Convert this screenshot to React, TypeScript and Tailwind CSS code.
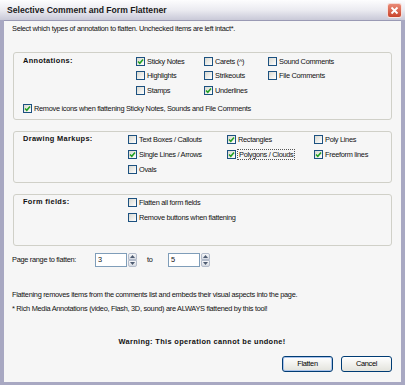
import React from "react";

function CheckBox({ checked, label, focus }: { checked?: boolean; label: string; focus?: boolean }) {
  return (
    <div className="flex items-center whitespace-nowrap">
      <span className="w-[9px] h-[9px] shrink-0 border border-[#1c5180] bg-gradient-to-br from-[#d8d8d0] to-white flex items-center justify-center">
        {checked ? (
          <svg width="7" height="7" viewBox="0 0 7 7">
            <path d="M1 3.4 L2.8 5.3 L6 1.4" stroke="#21a121" strokeWidth="1.5" fill="none" />
          </svg>
        ) : null}
      </span>
      <span className={"ml-[2px] leading-[9px] " + (focus ? "outline outline-1 outline-dotted outline-[#555] px-[1px]" : "")}>
        {label}
      </span>
    </div>
  );
}

function Spin({ value }: { value: string }) {
  return (
    <div className="flex items-center h-[14px]">
      <div className="w-[32px] h-[14px] bg-white border border-[#7f9db9] pl-[2px] leading-[12px]">{value}</div>
      <div className="flex flex-col ml-[1px]">
        <span className="w-[9px] h-[7px] border border-[#b4bccb] bg-gradient-to-b from-[#f6f7f9] to-[#d6dae2] rounded-t-[2px] flex items-center justify-center">
          <svg width="5" height="3" viewBox="0 0 5 3"><path d="M0 3 L2.5 0 L5 3 Z" fill="#4d5a70" /></svg>
        </span>
        <span className="w-[9px] h-[7px] border border-[#b4bccb] bg-gradient-to-b from-[#f6f7f9] to-[#d6dae2] rounded-b-[2px] flex items-center justify-center">
          <svg width="5" height="3" viewBox="0 0 5 3"><path d="M0 0 L2.5 3 L5 0 Z" fill="#4d5a70" /></svg>
        </span>
      </div>
    </div>
  );
}

function XpButton({ label, primary }: { label: string; primary?: boolean }) {
  return (
    <button
      className={
        "w-[51px] h-[16px] rounded-[3px] border border-[#003c74] bg-gradient-to-b from-white to-[#e3e3dc] text-black leading-[14px] " +
        (primary ? "shadow-[inset_0_0_0_1px_#a9c2ea]" : "")
      }
    >
      {label}
    </button>
  );
}

export default function App() {
  return (
    <div className="w-[405px] h-[385px] flex flex-col bg-[#a8a8c2] font-['Liberation_Sans',Arial,sans-serif] text-[7.4px] tracking-[-0.3px] text-[#111]">
      <div className="h-[20px] shrink-0 flex items-center justify-between bg-gradient-to-b from-[#fdfdfe] via-[#ebebf1] to-[#c9c9d8] pl-[7px] pr-[3px]">
        <span className="font-bold text-[8.6px] tracking-[0px] text-[#1a1a1a]">Selective Comment and Form Flattener</span>
        <span className="w-[15px] h-[15px] rounded-[3px] border border-white/80 bg-gradient-to-b from-[#e98a77] to-[#c9432a] flex items-center justify-center">
          <svg width="9" height="9" viewBox="0 0 9 9">
            <path d="M1.5 1.5 L7.5 7.5 M7.5 1.5 L1.5 7.5" stroke="white" strokeWidth="1.8" />
          </svg>
        </span>
      </div>

      <div className="flex-1 mx-[4px] mb-[3px] bg-[#f6f6f6] border-t border-[#9a9ab4] flex flex-col pl-[8px] pr-[9px]">
        <div className="mt-[3px] h-[10px] leading-[10px]">
          Select which types of annotation to flatten. Unchecked items are left intact*.
        </div>

        <div className="mt-[18px] ml-[1px] border border-[#d0d0c8] rounded-[3px] pl-[9px] pt-[1px] pb-[4px] flex flex-col">
          <div className="flex">
            <div className="w-[113px] font-bold tracking-[0.35px] pt-[2px] leading-[10px]">Annotations:</div>
            <div className="flex flex-col">
              <div className="flex h-[14px] items-center">
                <div className="w-[68px]"><CheckBox checked label="Sticky Notes" /></div>
                <div className="w-[64px]"><CheckBox label="Carets (^)" /></div>
                <CheckBox label="Sound Comments" />
              </div>
              <div className="flex h-[15px] items-center">
                <div className="w-[68px]"><CheckBox label="Highlights" /></div>
                <div className="w-[64px]"><CheckBox label="Strikeouts" /></div>
                <CheckBox label="File Comments" />
              </div>
              <div className="flex h-[14px] items-center">
                <div className="w-[68px]"><CheckBox label="Stamps" /></div>
                <div className="w-[64px]"><CheckBox checked label="Underlines" /></div>
              </div>
            </div>
          </div>
          <div className="mt-[4px] h-[14px] flex items-center">
            <CheckBox checked label="Remove icons when flattening Sticky Notes, Sounds and File Comments" />
          </div>
        </div>

        <div className="mt-[11px] ml-[1px] border border-[#d0d0c8] rounded-[3px] pl-[9px] pb-[5px] flex">
          <div className="w-[105px] font-bold tracking-[0.35px] pt-[2px] leading-[10px]">Drawing Markups:</div>
          <div className="flex flex-col">
            <div className="flex h-[15px] items-center">
              <div className="w-[99px]"><CheckBox label="Text Boxes / Callouts" /></div>
              <div className="w-[87px]"><CheckBox checked label="Rectangles" /></div>
              <CheckBox label="Poly Lines" />
            </div>
            <div className="flex h-[15px] items-center">
              <div className="w-[99px]"><CheckBox checked label="Single Lines / Arrows" /></div>
              <div className="w-[87px]"><CheckBox checked focus label="Polygons / Clouds" /></div>
              <CheckBox checked label="Freeform lines" />
            </div>
            <div className="flex h-[15px] items-center">
              <CheckBox label="Ovals" />
            </div>
          </div>
        </div>

        <div className="mt-[11px] ml-[1px] border border-[#d0d0c8] rounded-[3px] pl-[9px] pb-[20px] flex">
          <div className="w-[105px] font-bold tracking-[0.35px] pt-[2px] leading-[10px]">Form fields:</div>
          <div className="flex flex-col">
            <div className="flex h-[15px] items-center">
              <CheckBox label="Flatten all form fields" />
            </div>
            <div className="flex h-[15px] items-center">
              <CheckBox label="Remove buttons when flattening" />
            </div>
          </div>
        </div>

        <div className="mt-[7px] flex items-center h-[14px]">
          <span className="w-[83px]">Page range to flatten:</span>
          <Spin value="3" />
          <span className="ml-[10px] w-[21px]">to</span>
          <Spin value="5" />
        </div>

        <div className="mt-[23px] h-[10px] leading-[10px]">
          Flattening removes items from the comments list and embeds their visual aspects into the page.
        </div>
        <div className="mt-[4px] h-[10px] leading-[10px]">
          * Rich Media Annotations (video, Flash, 3D, sound) are ALWAYS flattened by this tool!
        </div>

        <div className="mt-[23px] h-[10px] leading-[10px] text-center font-bold tracking-[0.35px]">
          Warning: This operation cannot be undone!
        </div>

        <div className="mt-[9px] flex justify-end gap-[8px]">
          <XpButton primary label="Flatten" />
          <XpButton label="Cancel" />
        </div>
      </div>
    </div>
  );
}
